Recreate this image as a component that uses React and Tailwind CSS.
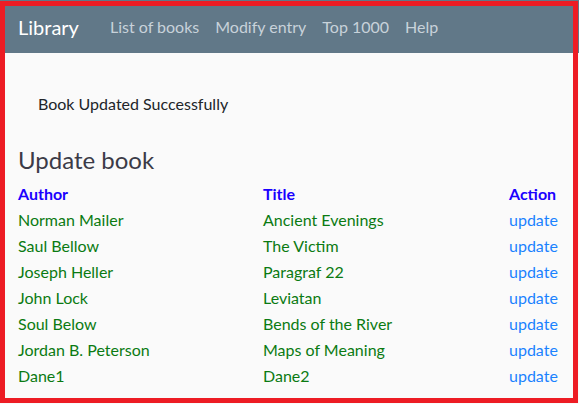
import React from "react";

const books = [
  ["Norman Mailer", "Ancient Evenings"],
  ["Saul Bellow", "The Victim"],
  ["Joseph Heller", "Paragraf 22"],
  ["John Lock", "Leviatan"],
  ["Soul Below", "Bends of the River"],
  ["Jordan B. Peterson", "Maps of Meaning"],
  ["Dane1", "Dane2"],
];

export default function App() {
  return (
    <div className="relative min-h-[404px] bg-[#fafafa] font-['Lato',sans-serif] text-[16px]">
      {/* navbar */}
      <nav className="flex h-[53px] items-center bg-[#617888] px-[18px]">
        <span className="mr-[31px] text-[20px] text-white">Library</span>
        <div className="flex gap-4 text-[#c8d2da]">
          <span>List of books</span>
          <span>Modify entry</span>
          <span>Top 1000</span>
          <span>Help</span>
        </div>
      </nav>

      <div className="px-[18px]">
        <div className="mt-[27px] px-5 py-3 text-[#212529]">Book Updated Successfully</div>
        <h3 className="mt-[17px] text-[24px] leading-[30px] text-[#3b3b47]">Update book</h3>

        <div className="mt-[6px] grid grid-cols-[245px_246px_auto] leading-[26px]">
          <div className="font-bold text-[#1a00ff]">Author</div>
          <div className="font-bold text-[#1a00ff]">Title</div>
          <div className="font-bold text-[#1a00ff]">Action</div>
          {books.map(([author, title]) => (
            <React.Fragment key={author}>
              <div className="text-[#0b7a12]">{author}</div>
              <div className="text-[#0b7a12]">{title}</div>
              <div className="text-[#1a82ff]">update</div>
            </React.Fragment>
          ))}
        </div>
      </div>

      {/* red frame */}
      <div className="pointer-events-none absolute left-0 top-[1px] h-[402px] w-[578px] border-[5px] border-[#ed1c24]" />
    </div>
  );
}
